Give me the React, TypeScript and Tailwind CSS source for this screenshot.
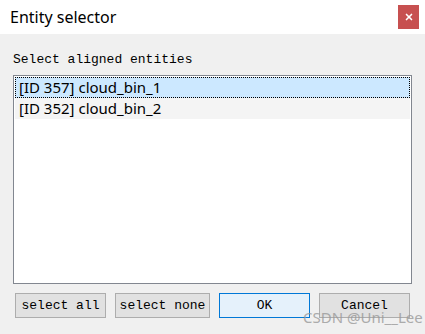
import { X } from 'lucide-react'

const rows = ['[ID 357] cloud_bin_1', '[ID 352] cloud_bin_2']

// Dialog: title bar + list of entities + button row
export default function App() {
  return (
    <div className="relative w-[425px] h-[334px] bg-[#f0f0f0] flex flex-col overflow-hidden">
      {/* Title bar */}
      <div className="h-[34px] bg-white flex items-center justify-between pl-[10px] pr-[6px] shrink-0">
        <span className="text-[16px] text-black" style={{ fontFamily: '"Noto Sans", "Liberation Sans", sans-serif' }}>
          Entity selector
        </span>
        <div className="w-[21px] h-[24px] bg-[#c75050] flex items-center justify-center">
          <X className="w-[10px] h-[10px] text-white" strokeWidth={4} />
        </div>
      </div>

      <div className="flex flex-col px-[13px] pt-[18px]">
        <div className="text-[13px] leading-[16px] text-black" style={{ fontFamily: '"Liberation Mono", monospace' }}>
          Select aligned entities
        </div>

        {/* List box */}
        <div className="mt-[7px] w-[399px] h-[209px] bg-white border border-[#828790] p-px flex flex-col">
          {rows.map((r, i) => (
            <div
              key={r}
              className={
                i === 0
                  ? 'h-[21px] bg-[#cce8ff] border border-dotted border-black flex items-center pl-[3px]'
                  : 'h-[21px] bg-[#f4f4f4] flex items-center pl-[4px]'
              }
            >
              <span className="text-[15px] text-black" style={{ fontFamily: '"Noto Sans", "Liberation Sans", sans-serif' }}>
                {r}
              </span>
            </div>
          ))}
        </div>

        {/* Buttons */}
        <div className="mt-[9px] flex gap-[9px] pl-[2px]" style={{ fontFamily: '"Liberation Mono", monospace' }}>
          <button className="w-[91px] h-[25px] bg-[#e1e1e1] border border-[#adadad] text-[13px] text-black">select all</button>
          <button className="w-[95px] h-[25px] bg-[#e1e1e1] border border-[#adadad] text-[13px] text-black">select none</button>
          <button className="w-[91px] h-[25px] bg-[#e5f1fb] border border-[#0078d7] text-[13px] text-black">OK</button>
          <button className="w-[91px] h-[25px] bg-[#e1e1e1] border border-[#adadad] text-[13px] text-black">Cancel</button>
        </div>
      </div>

      {/* Watermark */}
      <div
        className="absolute left-[303px] top-[306px] text-[15px] text-[#9a9a9a] opacity-80"
        style={{ fontFamily: '"Noto Sans", "Liberation Sans", sans-serif' }}
      >
        CSDN @Uni__Lee
      </div>
    </div>
  )
}
